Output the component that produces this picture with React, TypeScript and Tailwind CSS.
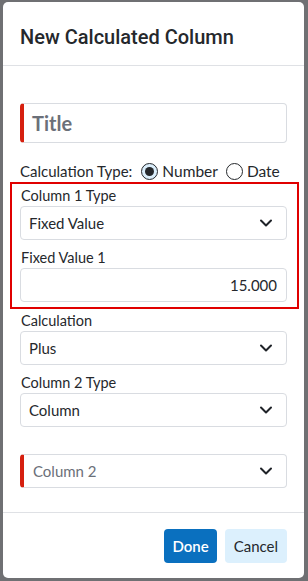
import React, { useState } from 'react';

const Chevron = () => (
  <svg width="16" height="16" viewBox="0 0 16 16" fill="none">
    <path d="M3 5.5L8 10.5L13 5.5" stroke="#1f2328" strokeWidth="2" strokeLinecap="round" strokeLinejoin="round" />
  </svg>
);

interface SelectProps {
  value: string;
  required?: boolean;
  placeholder?: boolean;
}

const SelectBox: React.FC<SelectProps> = ({ value, required, placeholder }) => (
  <div
    className={`flex h-[34px] items-center justify-between rounded border border-[#d9dce1] bg-white pr-3 ${
      required ? 'border-l-4 border-l-[#d6200f] pl-[9px]' : 'pl-2'
    }`}
  >
    <span className={`text-[15px] ${placeholder ? 'text-[#6b7079]' : 'text-[#25282c]'}`}>{value}</span>
    <Chevron />
  </div>
);

const Label: React.FC<{ text: string }> = ({ text }) => (
  <div className="pl-[1px] text-[14.5px] leading-[20px] text-[#25282c]">{text}</div>
);

const Radio: React.FC<{ checked: boolean; label: string; onClick: () => void }> = ({ checked, label, onClick }) => (
  <button onClick={onClick} className="flex items-center gap-[4px]">
    <span
      className={`flex h-[17px] w-[17px] items-center justify-center rounded-full border-[1.5px] border-[#25282c] ${
        checked ? 'bg-[#dbeefb]' : 'bg-white'
      }`}
    >
      {checked && <span className="h-[9px] w-[9px] rounded-full bg-[#25282c]" />}
    </span>
    <span className="text-[15.5px] leading-[20px] text-[#25282c]">{label}</span>
  </button>
);

export default function App() {
  const [calcType, setCalcType] = useState<'number' | 'date'>('number');

  return (
    <div className="h-[581px] w-[308px] bg-[#6f7073] pl-[3px] pr-[4px] pt-[2px] pb-[3px]" style={{ fontFamily: 'Lato, "Open Sans", sans-serif' }}>
      <div className="flex h-full flex-col rounded-[5px] bg-white">
        <div className="h-[64px] border-b border-[#dfe1e5] px-[17px] pt-[24px]">
          <h1 className="text-[20px] font-medium leading-[22px] text-[#25282c]" style={{ fontFamily: 'Roboto, sans-serif' }}>
            New Calculated Column
          </h1>
        </div>

        <div className="flex-1 border-b border-[#dfe1e5] px-[17px] pt-[37px]">
          <div className="flex h-[40px] items-center rounded border border-[#d9dce1] border-l-4 border-l-[#d6200f] pl-[8px]">
            <span className="text-[20px] font-bold text-[#6b7079]">Title</span>
          </div>

          <div className="mt-[18px] flex h-[20px] items-center">
            <span className="mr-[9px] text-[15px] leading-[20px] text-[#25282c]">Calculation Type:</span>
            <div className="flex items-center gap-[8px]">
              <Radio checked={calcType === 'number'} label="Number" onClick={() => setCalcType('number')} />
              <Radio checked={calcType === 'date'} label="Date" onClick={() => setCalcType('date')} />
            </div>
          </div>

          <div className="-ml-[10px] -mr-[12px] mt-[1px] border-2 border-[#e00000] pb-[5px] pl-[8px] pr-[10px] pt-[2px]">
            <Label text="Column 1 Type" />
            <SelectBox value="Fixed Value" />
            <div className="mt-[8px]">
              <Label text="Fixed Value 1" />
              <div className="flex h-[34px] items-center justify-end rounded border border-[#d9dce1] pr-[9px] text-[15px] text-[#25282c]">
                15.000
              </div>
            </div>
          </div>

          <div className="mt-[2px]">
            <Label text="Calculation" />
            <SelectBox value="Plus" />
          </div>
          <div className="mt-[8px]">
            <Label text="Column 2 Type" />
            <SelectBox value="Column" />
          </div>
          <div className="mt-[27px]">
            <SelectBox value="Column 2" required placeholder />
          </div>
        </div>

        <div className="flex justify-end gap-2 px-[17px] pb-[15px] pt-[16px]">
          <button className="h-[34px] rounded bg-[#0a70bf] px-[8px] text-[15px] font-semibold text-white">Done</button>
          <button className="h-[34px] rounded bg-[#dcf0fd] px-[9px] text-[15px] text-[#25282c]">Cancel</button>
        </div>
      </div>
    </div>
  );
}
